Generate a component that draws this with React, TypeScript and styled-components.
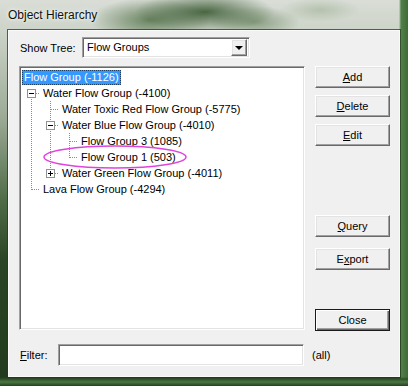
import * as React from "react"
import styled, { createGlobalStyle, css } from "styled-components"

type Link = "pipe" | "tee" | "elbow" | "down"
type Expander = "open" | "closed"

interface TreeNode {
  label: string
  cells: Link[]
  expander?: Expander
  selected?: boolean
}

const nodes: TreeNode[] = [
  { label: "Flow Group (-1126)", cells: [], selected: true },
  { label: "Water Flow Group (-4100)", cells: ["down"], expander: "open" },
  { label: "Water Toxic Red Flow Group (-5775)", cells: ["pipe", "tee"] },
  { label: "Water Blue Flow Group (-4010)", cells: ["pipe", "tee"], expander: "open" },
  { label: "Flow Group 3 (1085)", cells: ["pipe", "pipe", "tee"] },
  { label: "Flow Group 1 (503)", cells: ["pipe", "pipe", "elbow"] },
  { label: "Water Green Flow Group (-4011)", cells: ["pipe", "elbow"], expander: "closed" },
  { label: "Lava Flow Group (-4294)", cells: ["elbow"] }
]

const GlobalStyle = createGlobalStyle`
  * { box-sizing: border-box; }
  html, body { margin: 0; padding: 0; background: #fff; }
  body {
    font-family: "Liberation Sans", Arial, sans-serif;
    font-size: 11px;
    color: #000;
  }
`

const sunken = css`
  border: 1px solid;
  border-color: #a0a0a0 #ffffff #ffffff #a0a0a0;
  box-shadow: inset 1px 1px #696969, inset -1px -1px #e3e3e3;
  background: #ffffff;
`

const raised = css`
  border: 1px solid;
  border-color: #ffffff #696969 #696969 #ffffff;
  box-shadow: inset -1px -1px #a0a0a0, inset 1px 1px #e3e3e3;
  background: #f0f0f0;
`

const Window = styled.div`
  width: 408px;
  height: 386px;
  padding: 0 8px 9px 8px;
  display: flex;
  flex-direction: column;
  background:
    radial-gradient(ellipse 70px 20px at 205px 12px, rgba(48, 82, 40, 0.85), rgba(48, 82, 40, 0) 100%),
    radial-gradient(ellipse 60px 22px at 150px 20px, rgba(70, 104, 60, 0.75), rgba(70, 104, 60, 0) 100%),
    radial-gradient(ellipse 45px 16px at 255px 22px, rgba(90, 120, 80, 0.6), rgba(90, 120, 80, 0) 100%),
    radial-gradient(ellipse 40px 12px at 320px 10px, rgba(150, 170, 140, 0.5), rgba(150, 170, 140, 0) 100%),
    linear-gradient(to top, #233f1f 0px, #4a7843 4px, #2e4d29 7px, rgba(46, 77, 41, 0) 9px),
    linear-gradient(to left, #3e6a37 0px, #52804a 7px, rgba(82, 128, 74, 0) 9px),
    linear-gradient(to bottom, #d9ddd6 0px, #cdd4c9 30px, #9aa994 120px, #4f6c47 200px, #2a4525 260px, #213a1d 386px);
`

const TitleBar = styled.div`
  height: 30px;
  display: flex;
  align-items: center;
  font-size: 12px;
  color: #111;
  text-shadow: 0 0 6px rgba(255, 255, 255, 0.9), 0 0 3px rgba(255, 255, 255, 0.9);
`

const Client = styled.div`
  flex: 1;
  background: #f0f0f0;
  border: 1px solid #fafafa;
  box-shadow: 0 0 0 1px rgba(35, 58, 30, 0.75);
  padding: 6px 9px 0 10px;
  display: flex;
  flex-direction: column;
`

const HeaderRow = styled.div`
  height: 21px;
  display: flex;
  align-items: center;
`

const FieldLabel = styled.label<{ $width: number }>`
  width: ${(p) => p.$width}px;
  padding-left: 1px;
  white-space: nowrap;
`

const Combo = styled.div`
  ${sunken};
  width: 168px;
  height: 21px;
  display: flex;
  align-items: center;
  padding: 1px 2px 2px 4px;
`

const ComboText = styled.span`
  flex: 1;
`

const DropButton = styled.div`
  ${raised};
  width: 16px;
  height: 17px;
  display: flex;
  align-items: center;
  justify-content: center;

  &::after {
    content: "";
    border-left: 4px solid transparent;
    border-right: 4px solid transparent;
    border-top: 4px solid #000;
    margin-top: 1px;
  }
`

const Body = styled.div`
  margin-top: 8px;
  display: flex;
  gap: 10px;
`

const Tree = styled.div`
  ${sunken};
  position: relative;
  width: 286px;
  height: 264px;
  padding: 2px 0 0 1px;
  overflow: hidden;
`

const Row = styled.div`
  height: 16px;
  display: flex;
  align-items: center;
  white-space: nowrap;
`

const NodeLabel = styled.span<{ $selected?: boolean }>`
  margin-left: 1px;
  height: 15px;
  line-height: 13px;
  padding: 0 1px;
  border: 1px solid transparent;
  ${(p) =>
    p.$selected &&
    css`
      background: #3399ff;
      color: #fff;
      border: 1px dotted #1c3f66;
    `}
`

const ConnectorSvg = styled.svg`
  flex: none;
  display: block;
`

const Annotation = styled.svg`
  position: absolute;
  left: 22px;
  top: 76px;
  pointer-events: none;
`

const ButtonColumn = styled.div`
  display: flex;
  flex-direction: column;
`

const ButtonGroup = styled.div<{ $top: number; $gap: number }>`
  margin-top: ${(p) => p.$top}px;
  display: flex;
  flex-direction: column;
  gap: ${(p) => p.$gap}px;
`

const Button = styled.button<{ $default?: boolean }>`
  ${raised};
  width: 75px;
  height: 22px;
  padding: 0;
  font-family: "Liberation Sans", Arial, sans-serif;
  font-size: 11px;
  color: #000;
  ${(p) =>
    p.$default &&
    css`
      border: 1px solid #1a1a1a;
      box-shadow: inset 1px 1px #ffffff, inset -1px -1px #696969, inset -2px -2px #a0a0a0;
    `}
`

const FilterRow = styled.div`
  margin-top: 13px;
  height: 22px;
  display: flex;
  align-items: center;
`

const FilterInput = styled.input`
  ${sunken};
  width: 246px;
  height: 22px;
  outline: none;
  font-family: "Liberation Sans", Arial, sans-serif;
  font-size: 11px;
`

const AllHint = styled.span`
  margin-left: 8px;
`

const Connector = ({ kind, expander }: { kind: Link; expander?: Expander }) => (
  <ConnectorSvg width={19} height={16} viewBox='0 0 19 16'>
    <g stroke='#8c8c8c' strokeDasharray='1 1' shapeRendering='crispEdges'>
      {(kind === "pipe" || kind === "tee") && <line x1={10.5} y1={0} x2={10.5} y2={16} />}
      {kind === "elbow" && <line x1={10.5} y1={0} x2={10.5} y2={9} />}
      {kind === "down" && <line x1={10.5} y1={8} x2={10.5} y2={16} />}
      {kind !== "pipe" && <line x1={11} y1={8.5} x2={19} y2={8.5} />}
    </g>
    {expander && (
      <g shapeRendering='crispEdges'>
        <rect x={6.5} y={4.5} width={8} height={8} fill='#fff' stroke='#919191' />
        <line x1={8} y1={8.5} x2={13} y2={8.5} stroke='#000' />
        {expander === "closed" && <line x1={10.5} y1={6} x2={10.5} y2={11} stroke='#000' />}
      </g>
    )}
  </ConnectorSvg>
)

export default function App() {
  return (
    <>
      <GlobalStyle />
      <Window>
        <TitleBar>Object Hierarchy</TitleBar>
        <Client>
          <HeaderRow>
            <FieldLabel $width={63}>Show Tree:</FieldLabel>
            <Combo>
              <ComboText>Flow Groups</ComboText>
              <DropButton />
            </Combo>
          </HeaderRow>

          <Body>
            <Tree>
              {nodes.map((node) => (
                <Row key={node.label}>
                  {node.cells.map((cell, i) => (
                    <Connector
                      key={i}
                      kind={cell}
                      expander={i === node.cells.length - 1 ? node.expander : undefined}
                    />
                  ))}
                  <NodeLabel $selected={node.selected}>{node.label}</NodeLabel>
                </Row>
              ))}
              <Annotation width={146} height={28} viewBox='0 0 146 28'>
                <ellipse cx={73} cy={14} rx={71} ry={11} fill='none' stroke='#e044dc' strokeWidth={1.5} />
              </Annotation>
            </Tree>

            <ButtonColumn>
              <ButtonGroup $top={0} $gap={7}>
                <Button><u>A</u>dd</Button>
                <Button><u>D</u>elete</Button>
                <Button><u>E</u>dit</Button>
              </ButtonGroup>
              <ButtonGroup $top={69} $gap={11}>
                <Button><u>Q</u>uery</Button>
                <Button>E<u>x</u>port</Button>
              </ButtonGroup>
              <ButtonGroup $top={39} $gap={0}>
                <Button $default>Close</Button>
              </ButtonGroup>
            </ButtonColumn>
          </Body>

          <FilterRow>
            <FieldLabel $width={39}><u>F</u>ilter:</FieldLabel>
            <FilterInput />
            <AllHint>(all)</AllHint>
          </FilterRow>
        </Client>
      </Window>
    </>
  )
}
